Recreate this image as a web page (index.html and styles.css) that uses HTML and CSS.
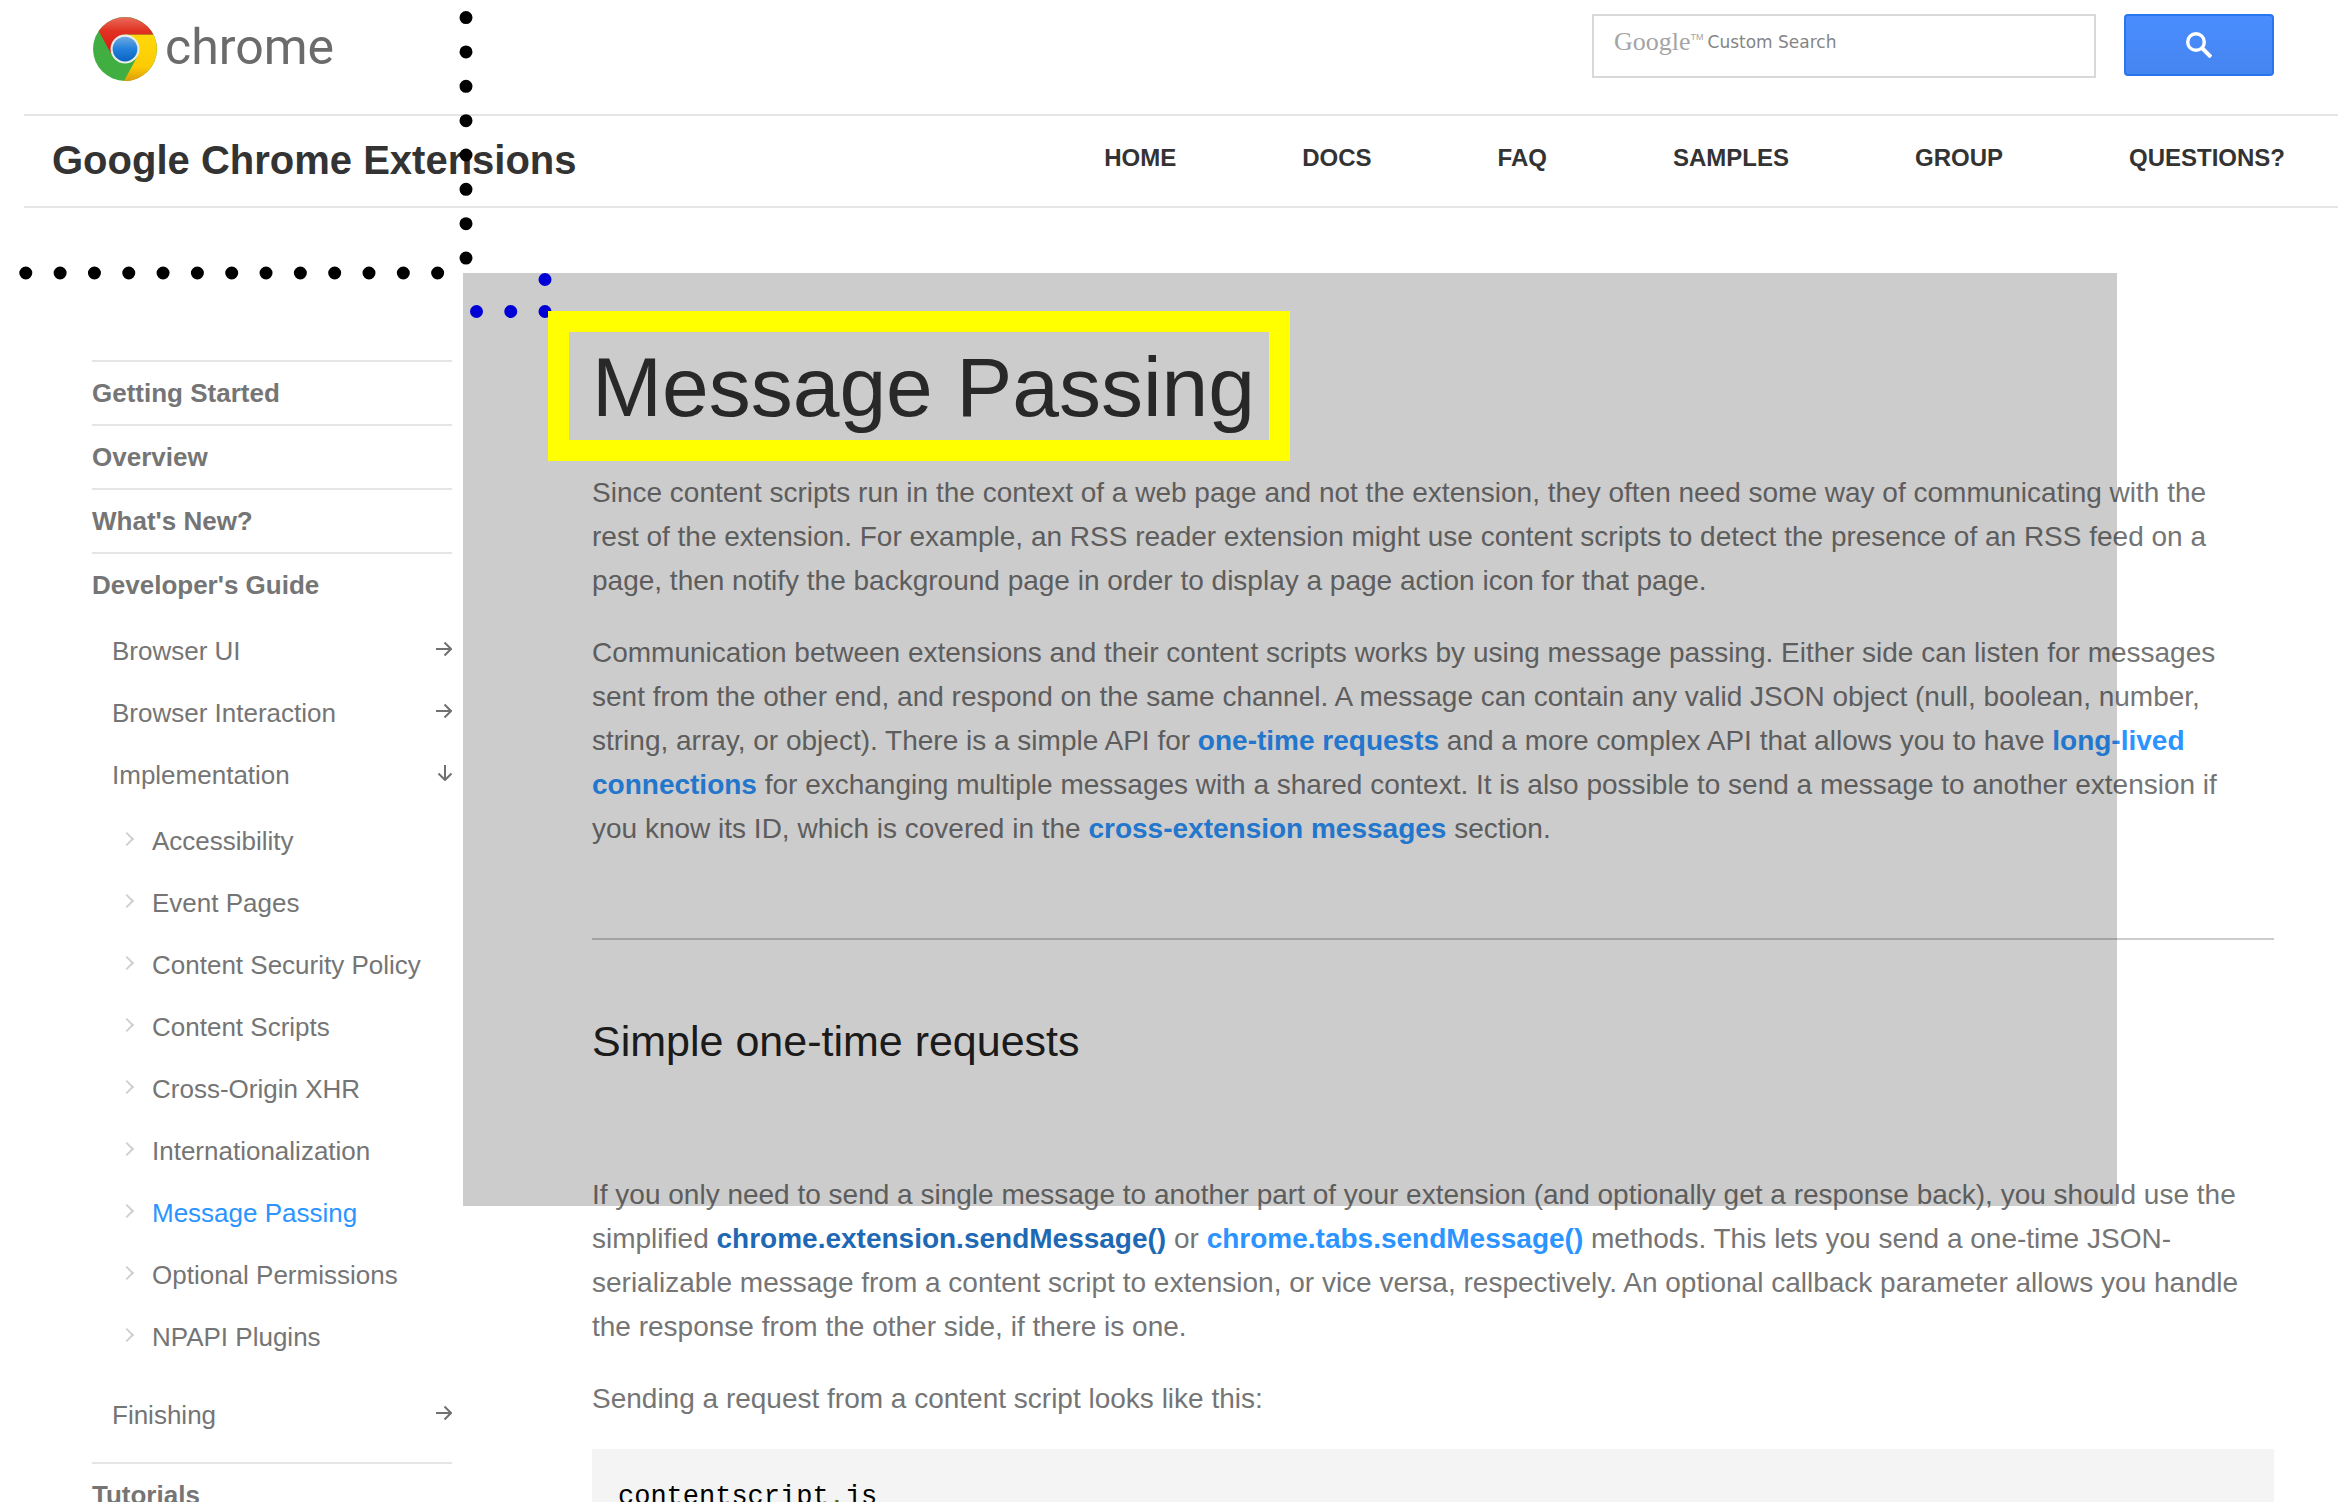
FILE: index.html
```html
<!DOCTYPE html>
<html lang="en">
<head>
<meta charset="utf-8">
<title>Message Passing - Google Chrome Extensions</title>
<link rel="stylesheet" href="styles.css">
</head>
<body>
<div class="page">
  <header class="topbar">
    <a class="logo" href="#">
      <svg class="logo-mark" viewBox="0 0 64 64" aria-hidden="true">
        <defs>
          <linearGradient id="red" x1="0" y1="0" x2="0" y2="1"><stop offset="0" stop-color="#ea6a5a"/><stop offset=".35" stop-color="#e03222"/><stop offset="1" stop-color="#dc1410"/></linearGradient>
          <linearGradient id="blue" x1="0" y1="0" x2="0" y2="1"><stop offset="0" stop-color="#6fa9e4"/><stop offset=".5" stop-color="#2380dc"/><stop offset="1" stop-color="#0c62c2"/></linearGradient>
          <linearGradient id="yellow" x1="0" y1="0" x2="0" y2="1"><stop offset="0" stop-color="#ffd90a"/><stop offset=".7" stop-color="#fccb04"/><stop offset="1" stop-color="#dc9c08"/></linearGradient>
        </defs>
        <circle cx="32" cy="32" r="31" fill="#40ae40"/>
        <path d="M32 18H59.5A31 31 0 0 1 31 63L44.100 39Z" fill="url(#yellow)"/>
        <path d="M6.500 14.500A31 31 0 0 1 59.500 18H32L19.900 39Z" fill="url(#red)"/>
        <circle cx="32" cy="32" r="14" fill="#e9eee9"/>
        <circle cx="32" cy="32" r="12" fill="url(#blue)"/>
      </svg>
      <span class="logo-name">chrome</span>
    </a>
    <form class="search">
      <div class="search-field">
        <input class="search-input" id="q" type="text">
        <label class="search-hint" for="q"><span class="hint-brand">Google</span><span class="hint-tm">TM</span><span class="hint-text">Custom Search</span></label>
      </div>
      <button class="search-button" type="button" aria-label="Search">
        <svg viewBox="0 0 26 26" width="26" height="26" fill="none" stroke="#fff" aria-hidden="true"><circle cx="10" cy="10" r="8.300" stroke-width="3.400"/><path d="M16.500 16.500L25 25" stroke-width="4"/></svg>
      </button>
    </form>
  </header>

  <nav class="navbar">
    <span class="site-title">Google Chrome Extensions</span>
    <div class="nav-links">
      <a href="#">HOME</a><a href="#">DOCS</a><a href="#">FAQ</a><a href="#">SAMPLES</a><a href="#">GROUP</a><a href="#">QUESTIONS?</a>
    </div>
  </nav>

  <div class="columns">
    <aside class="sidebar">
      <ul class="menu">
        <li><a href="#">Getting Started</a></li>
        <li><a href="#">Overview</a></li>
        <li><a href="#">What's New?</a></li>
        <li><a href="#">Developer's Guide</a>
          <ul class="submenu">
            <li><a href="#">Browser UI<svg class="arrow" viewBox="0 0 16 16"><path d="M0 8H15M8.500 1.500L15 8L8.500 14.500"/></svg></a></li>
            <li><a href="#">Browser Interaction<svg class="arrow" viewBox="0 0 16 16"><path d="M0 8H15M8.500 1.500L15 8L8.500 14.500"/></svg></a></li>
            <li><a href="#">Implementation<svg class="arrow" viewBox="0 0 16 16"><path d="M9 0V15M2.500 8.500L9 15L15.500 8.500"/></svg></a>
              <ul class="leaves">
                <li><a href="#">Accessibility</a></li>
                <li><a href="#">Event Pages</a></li>
                <li><a href="#">Content Security Policy</a></li>
                <li><a href="#">Content Scripts</a></li>
                <li><a href="#">Cross-Origin XHR</a></li>
                <li><a href="#">Internationalization</a></li>
                <li><a class="current" href="#">Message Passing</a></li>
                <li><a href="#">Optional Permissions</a></li>
                <li><a href="#">NPAPI Plugins</a></li>
              </ul>
            </li>
            <li><a href="#">Finishing<svg class="arrow" viewBox="0 0 16 16"><path d="M0 8H15M8.500 1.500L15 8L8.500 14.500"/></svg></a></li>
          </ul>
        </li>
        <li><a href="#">Tutorials</a></li>
      </ul>
    </aside>

    <main class="article">
      <h1>Message Passing</h1>
      <p>Since content scripts run in the context of a web page and not the extension, they often need some way of communicating with the<br>rest of the extension. For example, an RSS reader extension might use content scripts to detect the presence of an RSS feed on a<br>page, then notify the background page in order to display a page action icon for that page.</p>
      <p>Communication between extensions and their content scripts works by using message passing. Either side can listen for messages<br>sent from the other end, and respond on the same channel. A message can contain any valid JSON object (null, boolean, number,<br>string, array, or object). There is a simple API for <a href="#">one-time requests</a> and a more complex API that allows you to have <a href="#">long-lived<br>connections</a> for exchanging multiple messages with a shared context. It is also possible to send a message to another extension if<br>you know its ID, which is covered in the <a href="#">cross-extension messages</a> section.</p>
      <hr>
      <h2>Simple one-time requests</h2>
      <p>If you only need to send a single message to another part of your extension (and optionally get a response back), you should use the<br>simplified <a class="active" href="#">chrome.extension.sendMessage()</a> or <a href="#">chrome.tabs.sendMessage()</a> methods. This lets you send a one-time JSON-<br>serializable message from a content script to extension, or vice versa, respectively. An optional callback parameter allows you handle<br>the response from the other side, if there is one.</p>
      <p>Sending a request from a content script looks like this:</p>
      <pre>contentscript<span class="pun">.</span>js</pre>
    </main>
  </div>

  <div class="shade"></div>
  <svg class="dots" width="600" height="340" aria-hidden="true">
    <g fill="none" stroke-width="13" stroke-linecap="round">
      <path d="M466 17.600V260" stroke="#000" stroke-dasharray="0 34.350"/>
      <path d="M25.800 273H440" stroke="#000" stroke-dasharray="0 34.320"/>
      <path d="M476.500 311.500H546M545 279.500h1" stroke="#0000d6" stroke-dasharray="0 34.250"/>
    </g>
  </svg>
  <div class="frame"></div>
</div>
</body>
</html>
```

FILE: styles.css
```css
* { box-sizing: border-box; }

body {
  margin: 0;
  background: #fff;
  color: #757575;
  font: 28px/44px "Liberation Sans", Arial, sans-serif;
}

a { color: inherit; text-decoration: none; }
ul { margin: 0; padding: 0; list-style: none; }

.page { position: relative; padding-left: 24px; }

/* Top bar */
.topbar {
  display: flex;
  justify-content: space-between;
  align-items: flex-start;
  height: 116px;
  padding: 14px 64px 0 68px;
  border-bottom: 2px solid #e5e5e5;
}
.logo { display: flex; align-items: center; gap: 7px; height: 70px; }
.logo-mark { width: 66px; height: 66px; }
.logo-name { color: #6b6b6b; font: 50px/60px Roboto, sans-serif; padding-bottom: 4px; }

.search { display: flex; gap: 28px; }
.search-field { position: relative; width: 504px; height: 64px; }
.search-input {
  display: block;
  width: 100%;
  height: 100%;
  padding: 0 20px;
  border: 2px solid #d9d9d9;
  background: transparent;
  font: inherit;
}
.search-hint {
  position: absolute;
  left: 22px;
  top: 11px;
  display: flex;
  line-height: 34px;
  pointer-events: none;
}
.hint-brand { color: #a5a5a5; font-family: "Liberation Serif", serif; font-size: 26px; }
.hint-tm { color: #a5a5a5; font-family: "Liberation Sans", sans-serif; font-size: 9px; line-height: 24px; }
.hint-text { margin-left: 4px; color: #858585; font-family: "DejaVu Sans", sans-serif; font-size: 17px; }
.search-button {
  display: flex;
  align-items: center;
  justify-content: center;
  width: 150px;
  height: 62px;
  padding: 0;
  border: 2px solid #2875f0;
  border-radius: 4px;
  background: linear-gradient(#4a8dff, #4585f0);
}

/* Navigation bar */
.navbar {
  display: flex;
  justify-content: space-between;
  align-items: center;
  height: 92px;
  padding: 0 53px 2px 28px;
  border-bottom: 2px solid #e5e5e5;
  color: #333;
  font-weight: bold;
}
.site-title { font-size: 40px; }
.nav-links { display: flex; gap: 126px; padding-bottom: 4px; font-size: 24px; }

/* Columns */
.columns {
  display: grid;
  grid-template-columns: 360px minmax(0, 1fr);
  column-gap: 140px;
  padding: 0 64px 0 68px;
}

.sidebar { padding-top: 152px; font-size: 26px; line-height: 62px; }
.sidebar a { display: flex; align-items: center; justify-content: space-between; }
.menu > li { border-top: 2px solid #e5e5e5; font-weight: bold; }
.submenu { padding: 4px 0 16px 20px; font-weight: normal; }
.arrow { width: 16px; height: 16px; margin-bottom: 4px; fill: none; stroke: #707070; stroke-width: 2; }
.leaves { padding: 4px 0 16px 12px; }
.leaves a { justify-content: flex-start; gap: 20px; }
.leaves a::before {
  content: "";
  width: 8px;
  height: 8px;
  margin: 0 0 4px -2px;
  border: solid #d0d0d0;
  border-width: 2px 2px 0 0;
  transform: rotate(45deg);
}
.leaves .current { color: #2b94ff; }

.article { padding-top: 131px; }
.article p { margin: 0 0 28px; }
.article p a { color: #2b94ff; font-weight: bold; }
.article p a.active { color: #1f69b4; }
h1 { margin: 0 0 36px; color: #333; font-size: 84px; font-weight: normal; line-height: 96px; }
h2 { margin: 0 0 106px; color: #222; font-size: 43px; font-weight: normal; line-height: 52px; }
hr { height: 2px; margin: 87px 0 75px; border: 0; background: #ccc; }
pre {
  margin: 0;
  padding: 26px;
  background: #f4f4f4;
  color: #000;
  font: 27px/44px "Liberation Mono", "Courier New", monospace;
}
.pun { color: #660; }

/* Annotations drawn over the page */
.shade, .dots, .frame { position: absolute; pointer-events: none; }
.shade { left: 463px; right: 221px; top: 273px; height: 933px; background: rgba(0, 0, 0, .2); }
.dots { left: 0; top: 0; }
.frame { left: 548px; top: 311px; width: 742px; height: 150px; border: 21px solid #ff0; }
```
